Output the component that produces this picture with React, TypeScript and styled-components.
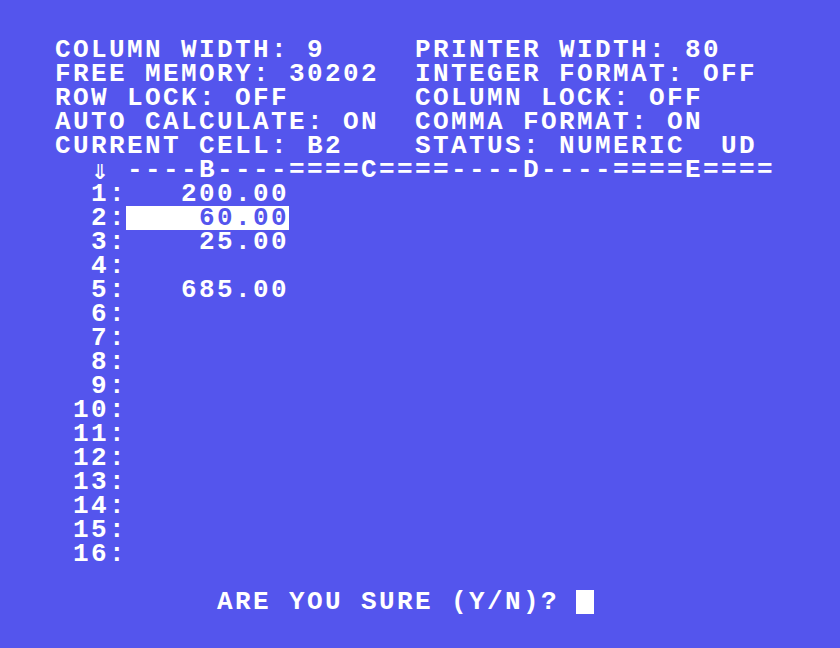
import React from 'react';
import styled, { createGlobalStyle } from 'styled-components';

const BLUE = '#5455ed';
const COLS = 40;

const GlobalStyle = createGlobalStyle`
  html, body {
    margin: 0;
    padding: 0;
    background: ${BLUE};
  }
`;

const infoLines = [
  'COLUMN WIDTH: 9     PRINTER WIDTH: 80',
  'FREE MEMORY: 30202  INTEGER FORMAT: OFF',
  'ROW LOCK: OFF       COLUMN LOCK: OFF',
  'AUTO CALCULATE: ON  COMMA FORMAT: ON',
  'CURRENT CELL: B2    STATUS: NUMERIC  UD',
];

const cells: Record<number, string> = {
  1: '200.00',
  2: '60.00',
  3: '25.00',
  5: '685.00',
};

const currentRow = 2;
const columnWidth = 9;

function TextScreen() {
  const rows = Array.from({ length: 16 }, (_, i) => i + 1);

  return (
    <Screen>
      {infoLines.map(line => (
        <Line key={line}>{line}</Line>
      ))}
      <Line>
        {'  '}
        <Arrow>⇓</Arrow>
        {' ----B----====C====----D----====E===='}
      </Line>
      {rows.map(n => {
        const label = String(n).padStart(3, ' ') + ':';
        const value = (cells[n] ?? '').padStart(columnWidth, ' ');
        return (
          <Line key={n}>
            {label}
            {n === currentRow ? <Inverse>{value}</Inverse> : value.trimEnd()}
          </Line>
        );
      })}
      <Line> </Line>
      <Line>
        {'         ARE YOU SURE (Y/N)? '}
        <Cursor />
      </Line>
    </Screen>
  );
}

export default function App() {
  return (
    <>
      <GlobalStyle />
      <TextScreen />
    </>
  );
}

const Screen = styled.div`
  width: ${COLS * 18}px;
  padding: 38px 0 0 55px;
  font-family: 'Liberation Mono', 'DejaVu Sans Mono', monospace;
  font-size: 26px;
  font-weight: bold;
  letter-spacing: 2.4px;
  color: #ffffff;
`;

const Line = styled.div`
  height: 24px;
  line-height: 24px;
  white-space: pre;
`;

const Arrow = styled.span`
  display: inline-block;
  width: 18px;
  text-align: center;
  letter-spacing: 0;
  font-family: 'DejaVu Sans Mono', 'DejaVu Sans', monospace;
  font-weight: bold;
  font-size: 28px;
  vertical-align: top;
`;

const Inverse = styled.span`
  display: inline-block;
  height: 24px;
  line-height: 24px;
  margin-left: -1px;
  padding-left: 1px;
  background: #ffffff;
  color: ${BLUE};
  vertical-align: top;
`;

const Cursor = styled.span`
  display: inline-block;
  width: 18px;
  height: 24px;
  margin-left: -1px;
  background: #ffffff;
  vertical-align: top;
`;
